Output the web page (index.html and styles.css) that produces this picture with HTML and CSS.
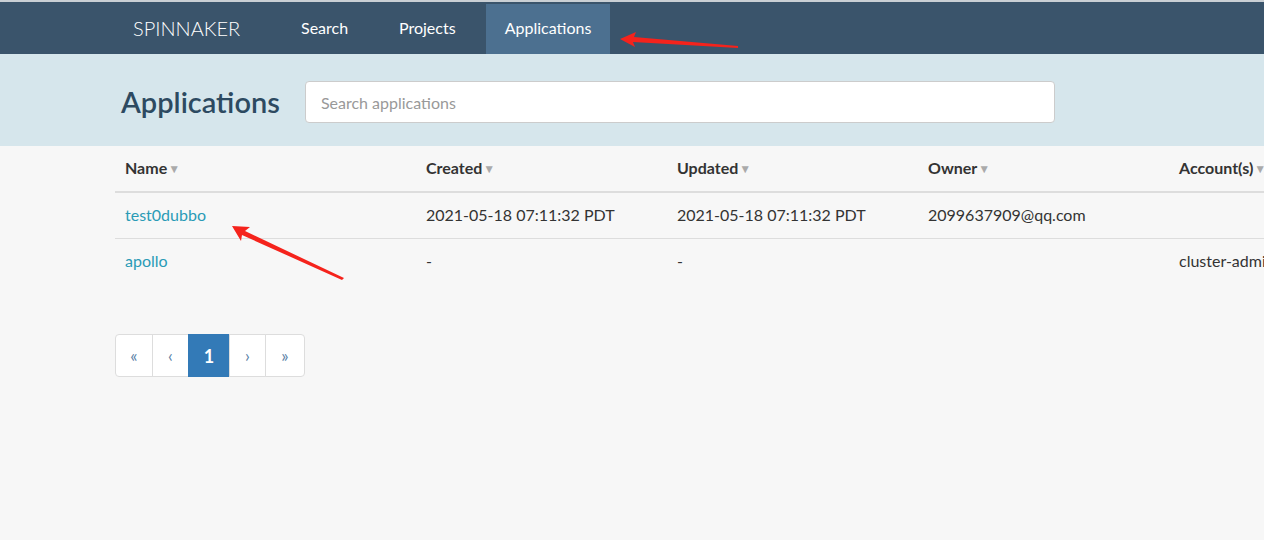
FILE: index.html
```html
<!DOCTYPE html>
<html>
<head>
<meta charset="utf-8">
<link rel="stylesheet" href="styles.css">
</head>
<body>
<div class="topline"></div>
<nav class="navbar">
  <a class="brand">SPINNAKER</a>
  <a class="nav-item w-search">Search</a>
  <a class="nav-item w-projects">Projects</a>
  <a class="nav-item active">Applications</a>
</nav>
<header class="page-header">
  <h1 class="title">Applications</h1>
  <div class="search"><span class="placeholder">Search applications</span></div>
</header>
<main class="content">
  <table class="apps">
    <thead>
      <tr>
        <th class="c1">Name<span class="sort">▼</span></th>
        <th class="c2">Created<span class="sort">▼</span></th>
        <th class="c2">Updated<span class="sort">▼</span></th>
        <th class="c2">Owner<span class="sort">▼</span></th>
        <th class="c3">Account(s)<span class="sort">▼</span></th>
      </tr>
    </thead>
    <tbody>
      <tr>
        <td><a class="link">test0dubbo</a></td>
        <td>2021-05-18 07:11:32 PDT</td>
        <td>2021-05-18 07:11:32 PDT</td>
        <td>2099637909@qq.com</td>
        <td></td>
      </tr>
      <tr class="last">
        <td><a class="link">apollo</a></td>
        <td>-</td>
        <td>-</td>
        <td></td>
        <td>cluster-admin</td>
      </tr>
    </tbody>
  </table>
  <ul class="pagination">
    <li>«</li>
    <li>‹</li>
    <li class="current">1</li>
    <li>›</li>
    <li>»</li>
  </ul>
</main>
<svg class="arrow arrow-nav" width="130" height="20" viewBox="0 0 130 20">
  <polygon points="0,8 16,1 14,6 118,15 118,17 13,11 15,16" fill="#f5231c"/>
</svg>
<svg class="arrow arrow-row" width="120" height="56" viewBox="0 0 120 56">
  <polygon points="0,0 18,1 13,5 112,52 110,54 10,9 9,15" fill="#f5231c"/>
</svg>
</body>
</html>
```
FILE: styles.css
```css
html, body {
  margin: 0;
  padding: 0;
}
body {
  width: 1264px;
  height: 540px;
  overflow: hidden;
  background: #f7f7f7;
  font-family: "Source Sans Pro", Lato, "Noto Sans", sans-serif;
  color: #333;
  position: relative;
}
.topline {
  height: 2px;
  background: #c9cfd4;
}
.navbar {
  height: 52px;
  background: #3a546b;
  display: flex;
  align-items: stretch;
  padding-left: 133px;
}
.navbar a {
  color: #fff;
  text-decoration: none;
  display: flex;
  align-items: center;
}
.brand {
  font-size: 20px;
  font-weight: 300;
  width: 150px;
  padding-bottom: 1px;
}
.nav-item {
  font-size: 16px;
  padding: 0 0 2px 18px;
  box-sizing: border-box;
}
.w-search { width: 98px; }
.w-projects { width: 105px; }
.nav-item.active {
  background: #4c7090;
  margin-top: 2px;
  width: 124px;
  padding: 0 0 4px 0;
  justify-content: center;
}
.page-header {
  height: 92px;
  background: #d6e6ec;
  display: flex;
  align-items: center;
  padding-left: 121px;
}
.title {
  margin: 3px 25px 0 0;
  font-size: 29px;
  font-weight: 600;
  color: #2d4a61;
}
.search {
  background: #fff;
  border: 1px solid #ccc;
  border-radius: 4px;
  display: flex;
  align-items: center;
  padding-left: 15px;
  box-sizing: border-box;
  width: 750px;
  height: 42px;
  margin-top: 4px;
}
.placeholder {
  color: #999;
  font-size: 16px;
}
.content {
  padding-left: 115px;
}
.apps {
  border-collapse: collapse;
  table-layout: fixed;
  width: 1305px;
  font-size: 16px;
}
.apps th, .apps td {
  text-align: left;
  padding: 0 10px 2px;
  white-space: nowrap;
  overflow: hidden;
}
.apps th {
  height: 43px;
  font-weight: 700;
  color: #333;
  border-bottom: 2px solid #ddd;
}
.apps td {
  height: 43px;
  border-bottom: 1px solid #ddd;
  color: #333;
}
.apps tr.last td {
  border-bottom: none;
}
.c1 { width: 281px; }
.c2 { width: 231px; }
.c3 { width: 281px; }
.sort {
  color: #aaa;
  font-size: 12px;
  margin-left: 1px;
  position: relative;
  top: -1px;
}
.link {
  color: #2a9bb6;
  text-decoration: none;
}
.pagination {
  list-style: none;
  display: flex;
  margin: 50px 0 0;
  padding: 0;
}
.pagination li {
  height: 43px;
  box-sizing: border-box;
  border: 1px solid #ddd;
  margin-left: -1px;
  background: #fff;
  color: #5a7fa6;
  font-size: 17px;
  display: flex;
  align-items: center;
  justify-content: center;
  width: 37px;
}
.pagination li:first-child {
  margin-left: 0;
  width: 38px;
  border-radius: 4px 0 0 4px;
}
.pagination li:last-child {
  width: 40px;
  border-radius: 0 4px 4px 0;
}
.pagination li.current {
  background: #337ab7;
  border-color: #337ab7;
  color: #fff;
  width: 42px;
  font-size: 18px;
  font-weight: 700;
}
.arrow {
  position: absolute;
}
.arrow-nav {
  left: 620px;
  top: 31px;
}
.arrow-row {
  left: 232px;
  top: 226px;
}
```
